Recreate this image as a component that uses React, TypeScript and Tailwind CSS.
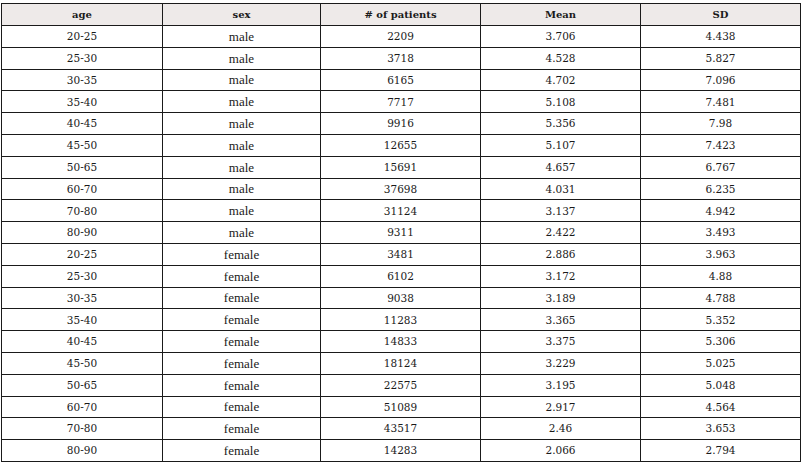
import React from "react";

const rows: [string, string, string, string, string][] = [
  ["20-25", "male", "2209", "3.706", "4.438"],
  ["25-30", "male", "3718", "4.528", "5.827"],
  ["30-35", "male", "6165", "4.702", "7.096"],
  ["35-40", "male", "7717", "5.108", "7.481"],
  ["40-45", "male", "9916", "5.356", "7.98"],
  ["45-50", "male", "12655", "5.107", "7.423"],
  ["50-65", "male", "15691", "4.657", "6.767"],
  ["60-70", "male", "37698", "4.031", "6.235"],
  ["70-80", "male", "31124", "3.137", "4.942"],
  ["80-90", "male", "9311", "2.422", "3.493"],
  ["20-25", "female", "3481", "2.886", "3.963"],
  ["25-30", "female", "6102", "3.172", "4.88"],
  ["30-35", "female", "9038", "3.189", "4.788"],
  ["35-40", "female", "11283", "3.365", "5.352"],
  ["40-45", "female", "14833", "3.375", "5.306"],
  ["45-50", "female", "18124", "3.229", "5.025"],
  ["50-65", "female", "22575", "3.195", "5.048"],
  ["60-70", "female", "51089", "2.917", "4.564"],
  ["70-80", "female", "43517", "2.46", "3.653"],
  ["80-90", "female", "14283", "2.066", "2.794"],
];

const num = "font-['DejaVu_Serif',serif] text-[10.5px]";
const sexF = "font-['Liberation_Serif',serif] text-[13px]";

export default function App() {
  return (
    <div className="w-[804px] h-[463px] bg-white pt-[3px] pl-[1px]">
      <table className="table-fixed border-collapse w-[800px] text-[#1a1a1a] text-center">
        <colgroup>
          <col className="w-[161px]" />
          <col className="w-[158px]" />
          <col className="w-[160px]" />
          <col className="w-[160px]" />
          <col className="w-[160px]" />
        </colgroup>
        <thead>
          <tr className="bg-[#eeeae9] h-[22px]">
            {["age", "sex", "# of patients", "Mean", "SD"].map((h) => (
              <th
                key={h}
                className="border border-[#1a1a1a] p-0 font-bold font-['DejaVu_Serif',serif] text-[10px] leading-none"
              >
                {h}
              </th>
            ))}
          </tr>
        </thead>
        <tbody>
          {rows.map((r, i) => (
            <tr key={i} className="h-[21.8px]">
              <td className={`border border-[#1a1a1a] p-0 leading-none ${num}`}>{r[0]}</td>
              <td className={`border border-[#1a1a1a] p-0 leading-none ${sexF}`}>{r[1]}</td>
              <td className={`border border-[#1a1a1a] p-0 leading-none ${num}`}>{r[2]}</td>
              <td className={`border border-[#1a1a1a] p-0 leading-none ${num}`}>{r[3]}</td>
              <td className={`border border-[#1a1a1a] p-0 leading-none ${num}`}>{r[4]}</td>
            </tr>
          ))}
        </tbody>
      </table>
    </div>
  );
}
